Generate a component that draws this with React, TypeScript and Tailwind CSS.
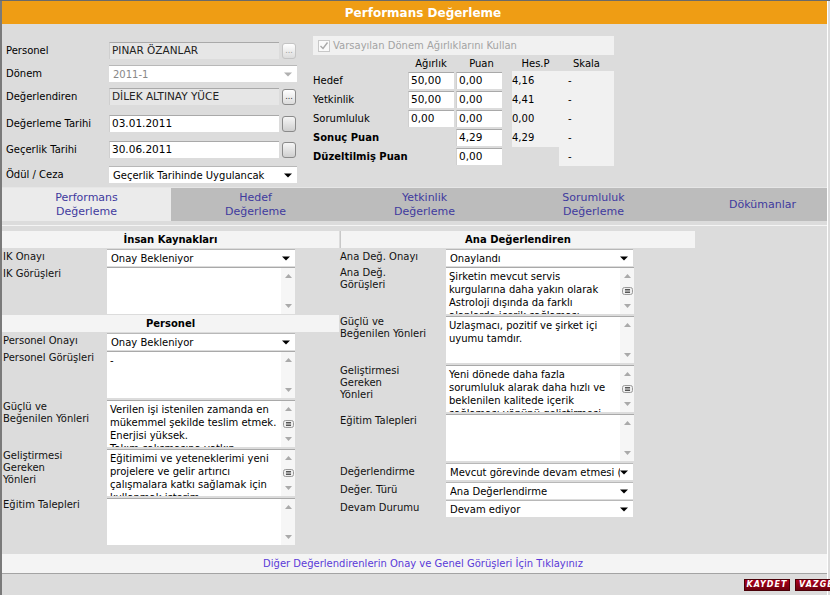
import React from 'react'

function DotsButton({ active }: { active?: boolean }) {
  return (
    <div
      className={
        'ml-[3px] flex h-[16px] w-[14px] items-end justify-center rounded-[3px] border bg-gradient-to-b from-white to-[#dcdcdc] pb-[3px] text-[8px] leading-[8px] ' +
        (active ? 'border-[#8a8a8a] text-[#333]' : 'border-[#c4c4c4] text-[#9a9a9a]')
      }
    >
      ...
    </div>
  )
}

function CalButton() {
  return <div className="ml-[3px] h-[16px] w-[14px] rounded-[3px] border border-[#8a8a8a] bg-gradient-to-b from-[#f6f6f6] to-[#cfcfcf]" />
}

function TextBox({ value, readOnly, w = 'w-[170px]' }: { value: string; readOnly?: boolean; w?: string }) {
  return (
    <div
      className={
        w +
        ' flex h-[17px] items-center overflow-hidden whitespace-nowrap border-t border-l border-t-[#a9a9a9] border-l-[#cfcfcf] pl-[2px] text-[10.5px] ' +
        (readOnly ? 'bg-[#e6e6e6] text-[#222]' : 'bg-white text-black')
      }
    >
      {value}
    </div>
  )
}

function Arrow({ color = '#000' }: { color?: string }) {
  return (
    <svg width="8" height="5" viewBox="0 0 8 5" className="shrink-0">
      <path d="M0 0.5 H8 L4 4.5 Z" fill={color} />
    </svg>
  )
}

function Select({ value, disabled, w = 'w-[188px]' }: { value: string; disabled?: boolean; w?: string }) {
  return (
    <div
      className={
        w +
        ' flex h-[17px] items-center overflow-hidden border-t border-t-[#b8b8b8] bg-white pr-[5px] pl-[4px] text-[10px] ' +
        (disabled ? 'text-[#888]' : 'text-black')
      }
    >
      <span className="flex-1 overflow-hidden whitespace-nowrap">{value}</span>
      <Arrow color={disabled ? '#b0b0b0' : '#000'} />
    </div>
  )
}

function Memo({ lines, thumb }: { lines: string[]; thumb?: boolean }) {
  return (
    <div className="flex h-[47px] w-[188px] border-t border-t-[#a9a9a9] bg-white">
      <div className="flex-1 overflow-hidden px-[3px] pt-[2px] text-[10px] leading-[13px] text-black">
        {lines.map((l, i) => (
          <div key={i} className="whitespace-nowrap">
            {l}
          </div>
        ))}
      </div>
      <div className="flex w-[14px] flex-col items-center justify-between bg-[#f6f6f6] py-[6px]">
        <svg width="7" height="4" viewBox="0 0 7 4">
          <path d="M0 4 L3.5 0 L7 4 Z" fill="#aaa" />
        </svg>
        {thumb ? (
          <svg width="11" height="8" viewBox="0 0 11 8">
            <rect x="0.5" y="0.5" width="10" height="7" rx="2" fill="#eee" stroke="#999" />
            <path d="M3 2.5 H8 M3 4 H8 M3 5.5 H8" stroke="#555" strokeWidth="1" />
          </svg>
        ) : (
          <span />
        )}
        <svg width="7" height="4" viewBox="0 0 7 4">
          <path d="M0 0 L7 0 L3.5 4 Z" fill="#aaa" />
        </svg>
      </div>
    </div>
  )
}

function SectionHead({ title }: { title: string }) {
  return <div className="mb-[1px] flex h-[17px] items-center justify-center bg-[#f4f4f4] text-[10px] font-bold text-black">{title}</div>
}

function Row({ label, children, h, w }: { label: React.ReactNode; children: React.ReactNode; h: string; w: string }) {
  return (
    <div className={'flex ' + h}>
      <div className={w + ' shrink-0 text-[10px] leading-[12px] text-[#111]'}>{label}</div>
      {children}
    </div>
  )
}

const TABS = [
  ['Performans', 'Değerleme'],
  ['Hedef', 'Değerleme'],
  ['Yetkinlik', 'Değerleme'],
  ['Sorumluluk', 'Değerleme'],
  ['Dökümanlar'],
]

const SCORES = [
  { label: 'Hedef', w: '50,00', p: '0,00', h: '4,16', s: '-' },
  { label: 'Yetkinlik', w: '50,00', p: '0,00', h: '4,41', s: '-' },
  { label: 'Sorumluluk', w: '0,00', p: '0,00', h: '0,00', s: '-' },
  { label: 'Sonuç Puan', bold: true, p: '4,29', h: '4,29', s: '-' },
  { label: 'Düzeltilmiş Puan', bold: true, p: '0,00', s: '-' },
]

export default function App() {
  return (
    <div className="h-[595px] w-[830px] overflow-hidden border-t border-t-[#6a6a6a] bg-[#dcdcdc] font-[DejaVu_Sans,sans-serif] text-black">
      <div className="flex h-[594px] w-[828px] flex-col border-r border-l-2 border-r-white border-l-[#7a7a7a]">
        {/* title */}
        <div className="flex h-[23px] shrink-0 items-center justify-center bg-[#ef9d14] pl-[17px] text-[12px] font-bold text-white">
          Performans Değerleme
        </div>

        {/* header form */}
        <div className="flex h-[163px] shrink-0">
          <div className="w-[311px] pt-[18px] pl-[4px]">
            <div className="flex h-[17px] items-center">
              <div className="w-[103px] text-[10px]">Personel</div>
              <TextBox value="PINAR ÖZANLAR" readOnly />
              <DotsButton />
            </div>
            <div className="mt-[6px] flex h-[17px] items-center">
              <div className="w-[103px] text-[10px]">Dönem</div>
              <Select value="2011-1" disabled />
            </div>
            <div className="mt-[6px] flex h-[17px] items-center">
              <div className="w-[103px] text-[10px]">Değerlendiren</div>
              <TextBox value="DİLEK ALTINAY YÜCE" readOnly />
              <DotsButton active />
            </div>
            <div className="mt-[10px] flex h-[17px] items-center">
              <div className="w-[103px] text-[10px]">Değerleme Tarihi</div>
              <TextBox value="03.01.2011" />
              <CalButton />
            </div>
            <div className="mt-[9px] flex h-[17px] items-center">
              <div className="w-[103px] text-[10px]">Geçerlik Tarihi</div>
              <TextBox value="30.06.2011" />
              <CalButton />
            </div>
            <div className="mt-[8px] flex h-[17px] items-center">
              <div className="w-[103px] text-[10px]">Ödül / Ceza</div>
              <Select value="Geçerlik Tarihinde Uygulancak" />
            </div>
          </div>

          <div className="w-[301px] pt-[12px]">
            <div className="flex h-[19px] items-center gap-[3px] bg-[#f1f1f1] pl-[5px] text-[10px] text-[#a3a3a3]">
              <svg width="12" height="12" viewBox="0 0 12 12">
                <rect x="0.5" y="0.5" width="11" height="11" fill="#fafafa" stroke="#c8c8c8" />
                <path d="M2.5 6 L5 8.5 L9.5 2.5" fill="none" stroke="#a8a8a8" strokeWidth="1.4" />
              </svg>
              Varsayılan Dönem Ağırlıklarını Kullan
            </div>
            <div className="grid grid-cols-[95px_46px_2px_46px_10px_47px_55px] text-[10px]">
              <div className="h-[14px]" />
              <div className="pt-[1px] text-center">Ağırlık</div>
              <div />
              <div className="pt-[1px] pl-[5px] text-center">Puan</div>
              <div />
              <div className="pt-[1px] text-center">Hes.P</div>
              <div className="pt-[1px] text-center">Skala</div>
              {SCORES.map((r) => (
                <React.Fragment key={r.label}>
                  <div className={'flex h-[19px] items-center ' + (r.bold ? 'font-bold' : '')}>{r.label}</div>
                  <div className="flex items-center">{r.w ? <TextBox value={r.w} w="w-[46px]" /> : null}</div>
                  <div />
                  <div className="flex items-center">
                    <TextBox value={r.p} w="w-[46px]" />
                  </div>
                  <div />
                  <div className={'flex items-center ' + (r.h ? 'bg-[#f1f1f1]' : '')}>{r.h}</div>
                  <div className="flex items-center bg-[#f1f1f1] pl-[9px]">{r.s}</div>
                </React.Fragment>
              ))}
            </div>
          </div>
        </div>

        {/* tabs */}
        <div className="flex h-[34px] shrink-0 overflow-hidden border-t border-t-[#e6e6e6]">
          {TABS.map((t, i) => (
            <div
              key={i}
              className={
                'flex w-[169px] shrink-0 flex-col items-center justify-center pt-[1px] text-[11px] leading-[14px] text-[#3f3a9e] ' +
                (i === 0 ? 'bg-[#ebebeb]' : 'bg-[#bcbcbc]')
              }
            >
              {t.map((s) => (
                <div key={s}>{s}</div>
              ))}
            </div>
          ))}
        </div>
        <div className="mt-[4px] h-[1px] shrink-0 bg-[#f4f4f4]" />

        {/* body */}
        <div className="flex flex-1 pt-[5px]">
          <div className="w-[337px]">
            <SectionHead title="İnsan Kaynakları" />
            <div className="pl-[1px]">
              <Row label="IK Onayı" h="h-[18px] items-start" w="w-[104px] pt-[2px]">
                <Select value="Onay Bekleniyor" />
              </Row>
              <Row label="IK Görüşleri" h="h-[48px]" w="w-[104px] pt-[1px]">
                <Memo lines={[]} />
              </Row>
            </div>
            <SectionHead title="Personel" />
            <div className="pl-[1px]">
              <Row label="Personel Onayı" h="h-[18px]" w="w-[104px] pt-[2px]">
                <Select value="Onay Bekleniyor" />
              </Row>
              <Row label="Personel Görüşleri" h="h-[49px]" w="w-[104px] pt-[1px]">
                <Memo lines={['-']} />
              </Row>
              <Row label={<>Güçlü ve<br />Beğenilen Yönleri</>} h="h-[49px]" w="w-[104px] pt-[1px]">
                <Memo
                  thumb
                  lines={['Verilen işi istenilen zamanda en', 'mükemmel şekilde teslim etmek.', 'Enerjisi yüksek.', 'Takım çalışmasına yatkın']}
                />
              </Row>
              <Row label={<>Geliştirmesi<br />Gereken<br />Yönleri</>} h="h-[49px]" w="w-[104px] pt-[1px]">
                <Memo
                  thumb
                  lines={['Eğitimimi ve yeteneklerimi yeni', 'projelere ve gelir artırıcı', 'çalışmalara katkı sağlamak için', 'kullanmak isterim.']}
                />
              </Row>
              <Row label="Eğitim Talepleri" h="h-[49px]" w="w-[104px] pt-[1px]">
                <Memo lines={[]} />
              </Row>
            </div>
          </div>

          <div className="ml-[1px] w-[355px]">
            <div className="border-l border-l-[#c8c8c8]">
              <SectionHead title="Ana Değerlendiren" />
            </div>
            <Row label="Ana Değ. Onayı" h="h-[18px]" w="w-[106px] pt-[2px]">
              <Select value="Onaylandı" w="w-[187px]" />
            </Row>
            <Row label={<>Ana Değ.<br />Görüşleri</>} h="h-[49px]" w="w-[106px]">
              <div className="w-[187px]">
                <Memo
                  thumb
                  lines={['Şirketin mevcut servis', 'kurgularına daha yakın olarak', 'Astroloji dışında da farklı', 'alanlarda içerik sağlaması']}
                />
              </div>
            </Row>
            <Row label={<>Güçlü ve<br />Beğenilen Yönleri</>} h="h-[49px]" w="w-[106px]">
              <Memo lines={['Uzlaşmacı, pozitif ve şirket içi', 'uyumu tamdır.']} />
            </Row>
            <Row label={<>Geliştirmesi<br />Gereken<br />Yönleri</>} h="h-[49px]" w="w-[106px]">
              <Memo
                thumb
                lines={['Yeni dönede daha fazla', 'sorumluluk alarak daha hızlı ve', 'beklenilen kalitede içerik', 'sağlaması yönünü geliştirmesi']}
              />
            </Row>
            <Row label="Eğitim Talepleri" h="h-[49px]" w="w-[106px] pt-[1px]">
              <Memo lines={[]} />
            </Row>
            <Row label="Değerlendirme" h="h-[19px]" w="w-[106px] pt-[3px]">
              <Select value="Mevcut görevinde devam etmesi (" w="w-[187px]" />
            </Row>
            <Row label="Değer. Türü" h="h-[18px]" w="w-[106px] pt-[2px]">
              <Select value="Ana Değerlendirme" w="w-[187px]" />
            </Row>
            <Row label="Devam Durumu" h="h-[18px]" w="w-[106px] pt-[2px]">
              <Select value="Devam ediyor" w="w-[187px]" />
            </Row>
          </div>
        </div>

        {/* footer link */}
        <div className="flex h-[20px] shrink-0 items-center justify-center border-b border-b-[#a3a3a3] bg-[#f4f4f4] pl-[17px] text-[10px] text-[#5a3ad8]">
          Diğer Değerlendirenlerin Onay ve Genel Görüşleri İçin Tıklayınız
        </div>
        <div className="flex h-[21px] shrink-0 items-start justify-end gap-[5px] pt-[5px]">
          <div className="flex h-[12px] w-[46px] items-center justify-center border border-[#4a0008] bg-gradient-to-b from-[#b0001c] to-[#6c000e] text-[8px] font-bold italic tracking-[1px] text-white">
            KAYDET
          </div>
          <div className="-mr-[20px] flex h-[12px] w-[52px] items-center justify-start border border-[#4a0008] bg-gradient-to-b from-[#b0001c] to-[#6c000e] pl-[3px] text-[8px] font-bold italic tracking-[1px] text-white">
            VAZGEÇ
          </div>
        </div>
      </div>
    </div>
  )
}
